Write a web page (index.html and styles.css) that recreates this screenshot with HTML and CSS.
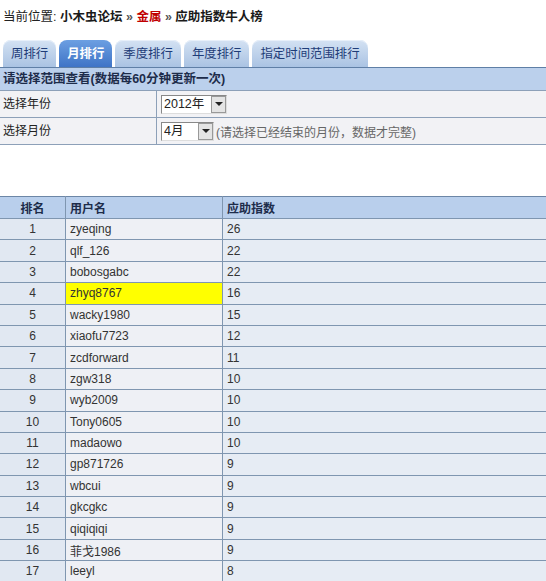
FILE: index.html
```html
<!DOCTYPE html>
<html>
<head>
<meta charset="utf-8">
<link rel="stylesheet" href="styles.css">
</head>
<body>
<div class="crumb">当前位置: <b>小木虫论坛</b> <span class="sep">»</span> <b class="red">金属</b> <span class="sep">»</span> <b>应助指数牛人榜</b></div>
<div class="tabs">
  <div class="tab">周排行</div>
  <div class="tab active">月排行</div>
  <div class="tab">季度排行</div>
  <div class="tab">年度排行</div>
  <div class="tab">指定时间范围排行</div>
</div>
<div class="form">
  <div class="fhead">请选择范围查看(数据每60分钟更新一次)</div>
  <div class="frow">
    <div class="flabel">选择年份</div>
    <div class="fval"><span class="sel w-year"><span class="sv">2012年</span><span class="btn"><i></i></span></span></div>
  </div>
  <div class="frow">
    <div class="flabel">选择月份</div>
    <div class="fval"><span class="sel w-month"><span class="sv">4月</span><span class="btn"><i></i></span></span><span class="hint">(请选择已经结束的月份，数据才完整)</span></div>
  </div>
</div>
<table class="rank">
  <thead><tr><th class="c1">排名</th><th class="c2">用户名</th><th class="c3">应助指数</th></tr></thead>
  <tbody>
    <tr><td class="c1">1</td><td class="c2">zyeqing</td><td class="c3">26</td></tr>
    <tr><td class="c1">2</td><td class="c2">qlf_126</td><td class="c3">22</td></tr>
    <tr><td class="c1">3</td><td class="c2">bobosgabc</td><td class="c3">22</td></tr>
    <tr><td class="c1">4</td><td class="c2 hl">zhyq8767</td><td class="c3">16</td></tr>
    <tr><td class="c1">5</td><td class="c2">wacky1980</td><td class="c3">15</td></tr>
    <tr><td class="c1">6</td><td class="c2">xiaofu7723</td><td class="c3">12</td></tr>
    <tr><td class="c1">7</td><td class="c2">zcdforward</td><td class="c3">11</td></tr>
    <tr><td class="c1">8</td><td class="c2">zgw318</td><td class="c3">10</td></tr>
    <tr><td class="c1">9</td><td class="c2">wyb2009</td><td class="c3">10</td></tr>
    <tr><td class="c1">10</td><td class="c2">Tony0605</td><td class="c3">10</td></tr>
    <tr><td class="c1">11</td><td class="c2">madaowo</td><td class="c3">10</td></tr>
    <tr><td class="c1">12</td><td class="c2">gp871726</td><td class="c3">9</td></tr>
    <tr><td class="c1">13</td><td class="c2">wbcui</td><td class="c3">9</td></tr>
    <tr><td class="c1">14</td><td class="c2">gkcgkc</td><td class="c3">9</td></tr>
    <tr><td class="c1">15</td><td class="c2">qiqiqiqi</td><td class="c3">9</td></tr>
    <tr><td class="c1">16</td><td class="c2">菲戈1986</td><td class="c3">9</td></tr>
    <tr><td class="c1">17</td><td class="c2">leeyl</td><td class="c3">8</td></tr>
  </tbody>
</table>
</body>
</html>
```
FILE: styles.css
```css
html, body {
  margin: 0;
  padding: 0;
  background: #fff;
  font-family: "Liberation Sans", "Noto Sans CJK SC", sans-serif;
  font-size: 12px;
  color: #222;
}
.crumb {
  padding: 9px 0 0 3px;
  height: 22px;
  line-height: 17px;
  font-size: 12.5px;
  color: #222;
}
.crumb b { color: #1a1a1a; }
.crumb .red { color: #c00000; }
.crumb .sep { font-weight: bold; color: #555; }
.tabs {
  display: flex;
  gap: 3px;
  padding-left: 3px;
  margin-top: 9px;
  height: 27px;
  align-items: flex-end;
}
.tab {
  height: 27px;
  line-height: 29px;
  padding: 0 8px;
  font-size: 12.4px;
  border-radius: 8px 8px 0 0;
  background: linear-gradient(#d4e2f3, #aac3e3);
  color: #1e3c78;
  box-shadow: inset 0 1px 0 #e8f0fa;
}
.tab.active {
  background: linear-gradient(#6c9fe2, #3f74c6);
  color: #fff;
  font-weight: bold;
  box-shadow: none;
}
.form {
  border-top: 1px solid #5f7fa6;
}
.fhead {
  height: 22px;
  line-height: 22px;
  font-size: 12.5px;
  background: #bbd0ec;
  font-weight: bold;
  color: #1d2c4a;
  padding-left: 3px;
  border-bottom: 1px solid #8da0b8;
}
.frow {
  display: flex;
  height: 26px;
  background: #f2f2f5;
  border-bottom: 1px solid #8da0b8;
}
.flabel {
  width: 153px;
  padding-left: 3px;
  line-height: 26px;
  border-right: 1px solid #8da0b8;
}
.fval {
  display: flex;
  align-items: center;
  padding-left: 4px;
}
.sel {
  display: flex;
  height: 19px;
  border: 1px solid #888;
  border-right-color: #ddd;
  border-bottom-color: #ddd;
  background: #fff;
  box-sizing: border-box;
  align-items: stretch;
}
.w-year { width: 66px; }
.w-month { width: 53px; }
.sv {
  flex: 1;
  line-height: 17px;
  padding-left: 2px;
  font-size: 12.5px;
  color: #222;
}
.btn {
  width: 15px;
  background: #e4e4e4;
  border: 1px solid #999;
  box-sizing: border-box;
  display: flex;
  align-items: center;
  justify-content: center;
}
.btn i {
  width: 0;
  height: 0;
  border-left: 4px solid transparent;
  border-right: 4px solid transparent;
  border-top: 4px solid #222;
}
.hint {
  color: #666;
  padding-left: 2px;
}
.rank {
  margin-top: 51px;
  width: 100%;
  border-collapse: collapse;
  border-top: 1px solid #6c86a6;
}
.rank th, .rank td {
  height: 20.4px;
  padding: 0 0 0 4px;
  border-bottom: 1px solid #7f96b0;
  border-right: 1px solid #7f96b0;
  text-align: left;
  vertical-align: middle;
  white-space: nowrap;
}
.rank th:last-child, .rank td:last-child { border-right: none; }
.rank th {
  height: 21px;
  background: #b9cfec;
  color: #1d2c4a;
  font-weight: bold;
}
.rank td { background: #eef0f5; color: #333; }
.rank td.c1 { background: #e1e8f2; text-align: center; padding: 0; }
.rank th.c1 { text-align: center; padding: 0; }
.rank td.c3 { background: #e6ecf4; }
.rank .c1 { width: 65px; }
.rank .c2 { width: 152px; }
.rank td.hl { background: #ffff00; }
```
